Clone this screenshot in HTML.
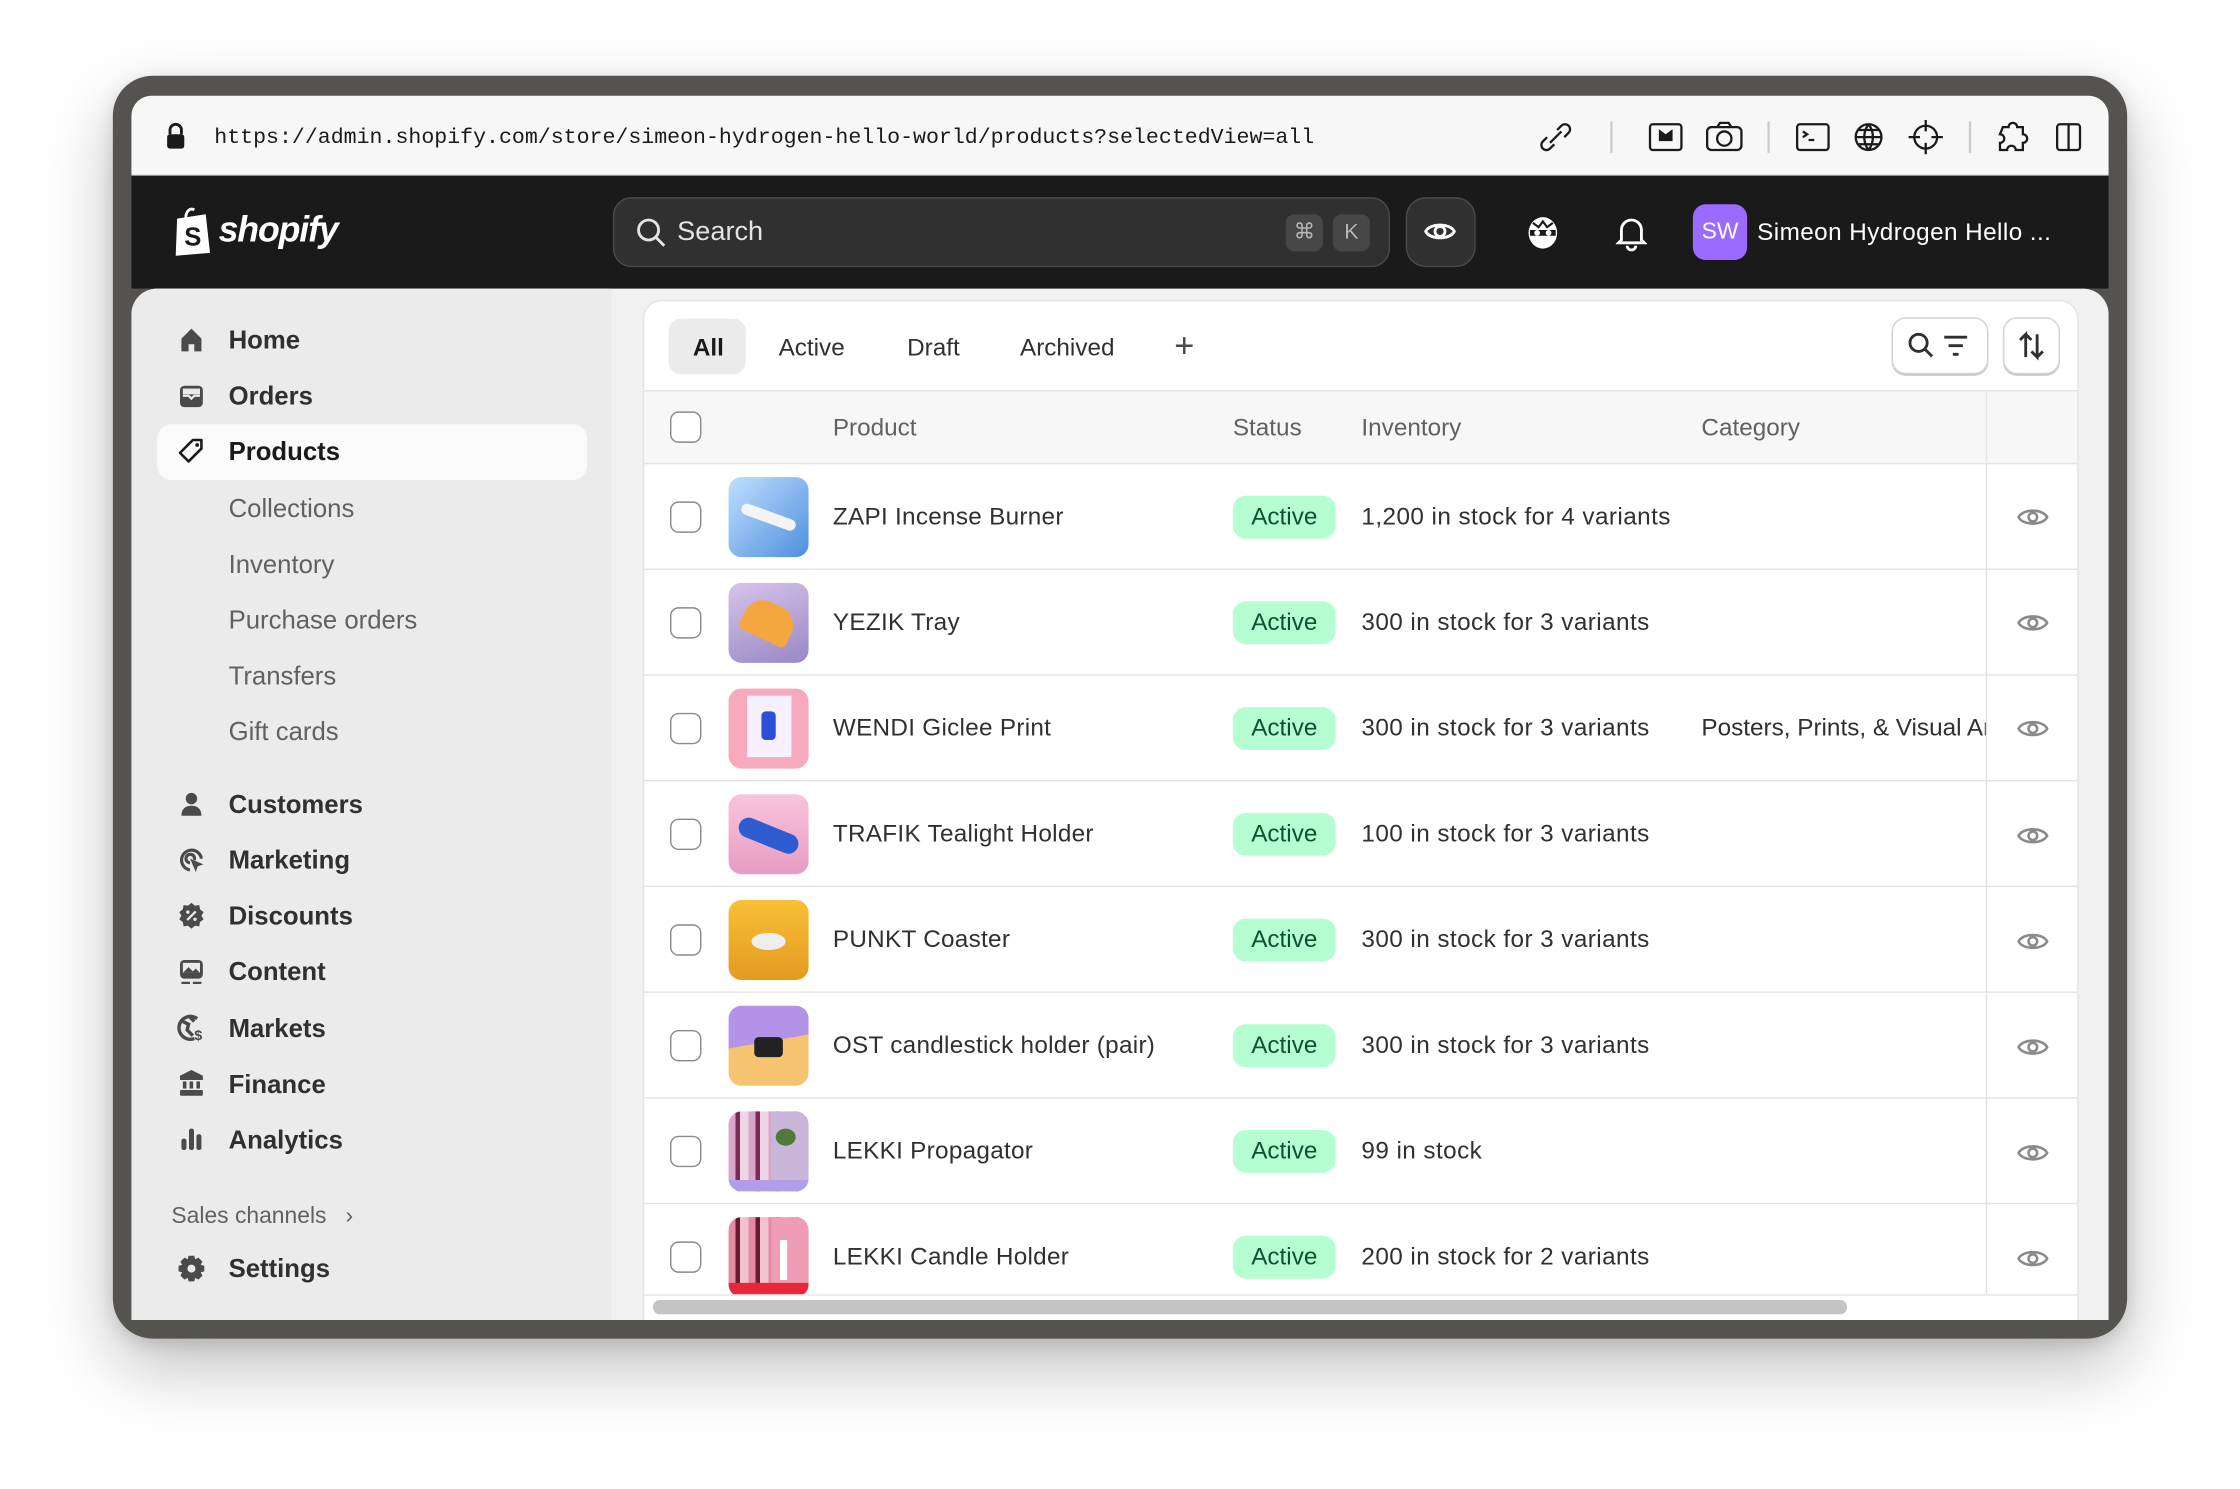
<!DOCTYPE html>
<html><head><meta charset="utf-8"><style>
*{box-sizing:border-box;margin:0;padding:0}
html,body{width:2240px;height:1488px;overflow:hidden;background:#fff}
#s{position:absolute;left:0;top:0;width:1568px;height:1042px;transform:scale(1.428571);transform-origin:0 0;font-family:"Liberation Sans",sans-serif;background:#fff}
.abs{position:absolute}
.frame{left:79px;top:53px;width:1410px;height:884px;background:#55534f;border-radius:28px;box-shadow:0 20px 50px rgba(0,0,0,.25),0 4px 12px rgba(0,0,0,.12)}
.url{left:92px;top:67px;width:1384px;height:56px;background:#f7f7f7;border-radius:14px 14px 0 0;border-bottom:1px solid #ddd}
.urltxt{left:150px;top:87px;font-family:"Liberation Mono",monospace;font-size:15.1px;color:#1a1a1a}
.nav{left:92px;top:123px;width:1384px;height:79px;background:#1a1a1a}
.body{left:92px;top:202px;width:1384px;height:722px;background:#f1f1f1;border-radius:18px 18px 0 0;overflow:hidden}
.side{left:0;top:0;width:336px;height:722px;background:#ebebeb}
.ni{position:absolute;left:68px;font-size:18px;font-weight:bold;color:#303030}
.si{position:absolute;left:68px;font-size:18px;color:#616161}
.ic{position:absolute;left:32px;width:20px;height:20px}
.card{left:359px;top:9px;width:1003px;height:730px;background:#fff;border-radius:12px;box-shadow:0 0 0 1px #e3e3e3;overflow:hidden}
.tab{position:absolute;top:23px;font-size:17px;color:#303030}
.th{position:absolute;top:79px;font-size:17px;color:#616161}
.row{position:absolute;left:0;width:1003px;height:74px;border-top:1px solid #e3e3e3}
.cb{position:absolute;left:18px;width:22px;height:22px;border:1.5px solid #8a8a8a;border-radius:6px;background:#fff}
.thumb{position:absolute;left:59px;top:9px;width:56px;height:56px;border-radius:9px;overflow:hidden}
.pn{position:absolute;left:132px;top:27px;font-size:17px;color:#303030;letter-spacing:0.2px}
.badge{position:absolute;left:412px;top:22px;height:30px;width:72px;text-align:center;line-height:30px;border-radius:9px;background:#b4fed2;color:#0c5132;font-size:17px}
.inv{position:absolute;left:502px;top:27px;font-size:17px;color:#303030;letter-spacing:0.3px}
.cat{position:absolute;left:740px;top:27px;font-size:17px;color:#303030;width:200px;white-space:nowrap;overflow:hidden}
</style></head><body><div id="s">
<div class="abs frame"></div>
<div class="abs url"></div>
<svg class="abs" style="left:115px;top:85px" width="16" height="20" viewBox="0 0 16 20"><path d="M4 9V6a4 4 0 018 0v3" fill="none" stroke="#1a1a1a" stroke-width="2"/><rect x="2" y="9" width="12" height="10" rx="2" fill="#1a1a1a"/></svg>
<div class="abs urltxt">https://admin.shopify.com/store/simeon-hydrogen-hello-world/products?selectedView=all</div>
<svg class="abs" style="left:1076px;top:83px" width="400" height="26" viewBox="0 0 400 26" fill="none" stroke="#1a1a1a" stroke-width="1.6">
<path d="M9 17l8-8M7 13l-3 3a3.5 3.5 0 005 5l3-3M19 13l3-3a3.5 3.5 0 00-5-5l-3 3"/>
<line x1="52" y1="2" x2="52" y2="24" stroke="#ccc"/>
<rect x="79" y="4" width="22" height="18" rx="2"/><path d="M86 9l4 3 4-3v6h-8z" fill="#1a1a1a"/>
<rect x="119" y="6" width="24" height="16" rx="3"/><circle cx="131" cy="14" r="5"/><path d="M126 6l2-3h6l2 3"/>
<line x1="162" y1="2" x2="162" y2="24" stroke="#ccc"/>
<rect x="182" y="4" width="22" height="18" rx="2"/><path d="M186 9l3 2-3 2M190 15h4"/>
<circle cx="232" cy="13" r="9"/><path d="M223 13h18M232 4c-4 5-4 13 0 18M232 4c4 5 4 13 0 18M225 8h14M225 18h14"/>
<circle cx="272" cy="13" r="8"/><path d="M272 1v8M272 17v8M260 13h8M276 13h8"/>
<line x1="303" y1="2" x2="303" y2="24" stroke="#ccc"/>
<path d="M326 6h4a3 3 0 016 0h4v5a3 3 0 010 6v5h-5a3 3 0 00-6 0h-5v-5a3 3 0 000-6z"/>
<rect x="364" y="4" width="16" height="18" rx="2"/><line x1="372" y1="4" x2="372" y2="22"/>
</svg>
<div class="abs nav"></div>
<svg class="abs" style="left:120px;top:144px" width="30" height="36" viewBox="0 0 30 36"><path d="M4 9l20-3 3 27-24 2z" fill="#fff"/><path d="M10 9c0-5 3-8 6-6" fill="none" stroke="#fff" stroke-width="2"/><text x="9" y="28" font-family="Liberation Sans" font-weight="bold" font-size="18" fill="#1a1a1a">S</text></svg>
<div class="abs" style="left:153px;top:147px;font-size:25px;font-weight:bold;font-style:italic;color:#fff;letter-spacing:-0.8px">shopify</div>
<div class="abs" style="left:429px;top:138px;width:544px;height:49px;background:#303030;border:1px solid #4a4a4a;border-radius:13px"></div>
<svg class="abs" style="left:445px;top:152px" width="22" height="22" viewBox="0 0 22 22" fill="none" stroke="#e3e3e3" stroke-width="2"><circle cx="9" cy="9" r="7"/><path d="M14 14l6 6"/></svg>
<div class="abs" style="left:474px;top:152px;font-size:19px;color:#e3e3e3">Search</div>
<div class="abs" style="left:900px;top:150px;width:26px;height:26px;background:#474747;border-radius:6px;color:#b5b5b5;font-size:15px;text-align:center;line-height:26px">⌘</div>
<div class="abs" style="left:933px;top:150px;width:26px;height:26px;background:#474747;border-radius:6px;color:#b5b5b5;font-size:15px;text-align:center;line-height:26px">K</div>
<div class="abs" style="left:984px;top:138px;width:49px;height:49px;background:#303030;border:1px solid #4a4a4a;border-radius:14px"></div>
<svg class="abs" style="left:996px;top:150px" width="24" height="24" viewBox="0 0 24 24" fill="none" stroke="#fff" stroke-width="2"><path d="M2 12c3-6 17-6 20 0c-3 6-17 6-20 0z"/><circle cx="12" cy="12" r="3.5"/></svg>
<svg class="abs" style="left:1068px;top:150px" width="24" height="26" viewBox="0 0 24 26"><ellipse cx="12" cy="13" rx="10" ry="11" fill="#fff"/><path d="M3 11h18v4H3z" fill="#1a1a1a"/><circle cx="8" cy="13" r="2" fill="#fff"/><circle cx="16" cy="13" r="2" fill="#fff"/><path d="M5 6l4 3 3-4 3 4 4-3" stroke="#1a1a1a" fill="none" stroke-width="1.5"/></svg>
<svg class="abs" style="left:1131px;top:150px" width="22" height="26" viewBox="0 0 22 26" fill="none" stroke="#fff" stroke-width="2"><path d="M4 18V11a7 7 0 0114 0v7l2 2H2z"/><path d="M8 22a3 3 0 006 0"/></svg>
<div class="abs" style="left:1185px;top:143px;width:38px;height:39px;background:#9b6bff;border-radius:9px;color:#fff;font-size:16px;text-align:center;line-height:39px">SW</div>
<div class="abs" style="left:1230px;top:153px;font-size:17px;color:#fff;letter-spacing:0.3px">Simeon Hydrogen Hello ...</div>

<div class="abs body">
 <div class="abs side">
  <div class="abs" style="left:18px;top:95px;width:301px;height:39px;background:#fafafa;border-radius:10px"></div>
  <svg class="ic" style="top:26px" viewBox="0 0 20 20"><path d="M3 9l7-7 7 7v9h-5v-5H8v5H3z" fill="#4a4a4a"/></svg>
  <div class="ni" style="top:26px">Home</div>
  <svg class="ic" style="top:65px" viewBox="0 0 20 20"><rect x="2" y="3" width="16" height="15" rx="3" fill="#4a4a4a"/><path d="M4 10h4l2 2 2-2h4" stroke="#ebebeb" fill="none" stroke-width="1.6"/><rect x="4" y="5" width="12" height="4" fill="#ebebeb"/></svg>
  <div class="ni" style="top:65px">Orders</div>
  <svg class="ic" style="top:104px" viewBox="0 0 20 20"><path d="M11 2h6v6l-9 9-6-6z" fill="none" stroke="#1a1a1a" stroke-width="1.8" stroke-linejoin="round"/><circle cx="14" cy="5.5" r="1.3" fill="#1a1a1a"/></svg>
  <div class="ni" style="top:104px;color:#1a1a1a">Products</div>
  <div class="si" style="top:144px">Collections</div>
  <div class="si" style="top:183px">Inventory</div>
  <div class="si" style="top:222px">Purchase orders</div>
  <div class="si" style="top:261px">Transfers</div>
  <div class="si" style="top:300px">Gift cards</div>
  <svg class="ic" style="top:351px" viewBox="0 0 20 20" fill="#4a4a4a"><circle cx="10" cy="6" r="4"/><path d="M3 18c0-5 3-7 7-7s7 2 7 7z"/></svg>
  <div class="ni" style="top:351px">Customers</div>
  <svg class="ic" style="top:390px" viewBox="0 0 20 20" fill="none" stroke="#4a4a4a" stroke-width="2.2"><path d="M17 9a7 7 0 10-8 8"/><path d="M12 10a3 3 0 10-3 2"/><path d="M10 10l7 3-3 1-1 3z" fill="#4a4a4a" stroke-width="1"/></svg>
  <div class="ni" style="top:390px">Marketing</div>
  <svg class="ic" style="top:429px" viewBox="0 0 20 20"><path d="M10 1l2.5 2 3-.5.5 3 2.5 2-1.5 2.5 1.5 2.5-2.5 2-.5 3-3-.5L10 19l-2.5-2-3 .5-.5-3-2.5-2L3 10 1.5 7.5l2.5-2 .5-3 3 .5z" fill="#4a4a4a"/><path d="M7 13l6-6" stroke="#ebebeb" stroke-width="1.6"/><circle cx="7.5" cy="7.5" r="1.2" fill="#ebebeb"/><circle cx="12.5" cy="12.5" r="1.2" fill="#ebebeb"/></svg>
  <div class="ni" style="top:429px">Discounts</div>
  <svg class="ic" style="top:468px" viewBox="0 0 20 20"><rect x="2" y="2" width="16" height="13" rx="3" fill="#4a4a4a"/><rect x="4" y="4" width="12" height="7" fill="#ebebeb"/><path d="M4 11l4-4 3 3 2-2 3 3z" fill="#4a4a4a"/><path d="M3 18h6M11 18h6" stroke="#4a4a4a" stroke-width="1.6"/></svg>
  <div class="ni" style="top:468px">Content</div>
  <svg class="ic" style="top:507px" viewBox="0 0 20 20"><path d="M14 4a8 8 0 10-2 14" fill="none" stroke="#4a4a4a" stroke-width="2.4"/><path d="M4 6l4 2-1 4 4 4M9 3l3 3" stroke="#4a4a4a" stroke-width="2.4" fill="none"/><text x="12" y="19" font-size="10" font-weight="bold" fill="#4a4a4a" font-family="Liberation Sans">$</text></svg>
  <div class="ni" style="top:508px">Markets</div>
  <svg class="ic" style="top:546px" viewBox="0 0 20 20" fill="#4a4a4a"><path d="M10 1l8 4v3H2V5z"/><rect x="2" y="15" width="16" height="4" rx="1"/><rect x="4" y="9" width="2.5" height="5"/><rect x="8.7" y="9" width="2.5" height="5"/><rect x="13.5" y="9" width="2.5" height="5"/></svg>
  <div class="ni" style="top:547px">Finance</div>
  <svg class="ic" style="top:585px" viewBox="0 0 20 20" fill="#4a4a4a"><rect x="3" y="10" width="3.5" height="8" rx="1.5"/><rect x="8.3" y="3" width="3.5" height="15" rx="1.5"/><rect x="13.5" y="7" width="3.5" height="11" rx="1.5"/></svg>
  <div class="ni" style="top:586px">Analytics</div>
  <div class="abs" style="left:28px;top:641px;font-size:16px;color:#616161">Sales channels&nbsp;&nbsp; ›</div>
  <svg class="ic" style="top:676px" viewBox="0 0 20 20"><path d="M8 1h4l.6 2.5 2.3-1.2 2.8 2.8-1.2 2.3L19 8v4l-2.5.6 1.2 2.3-2.8 2.8-2.3-1.2L12 19H8l-.6-2.5-2.3 1.2-2.8-2.8 1.2-2.3L1 12V8l2.5-.6-1.2-2.3 2.8-2.8 2.3 1.2z" fill="#4a4a4a"/><circle cx="10" cy="10" r="2.8" fill="#ebebeb"/></svg>
  <div class="ni" style="top:676px">Settings</div>
 </div>
 <div class="abs card">
  <div class="abs" style="left:17px;top:12px;width:54px;height:39px;background:#ebebeb;border-radius:9px"></div>
  <div class="tab" style="left:34px;font-weight:bold;color:#1a1a1a">All</div>
  <div class="tab" style="left:94px">Active</div>
  <div class="tab" style="left:184px">Draft</div>
  <div class="tab" style="left:263px">Archived</div>
  <div class="tab" style="left:371px;font-size:24px;top:18px;color:#4a4a4a">+</div>
  <div class="abs" style="left:874px;top:12px;width:66px;height:38px;border-radius:9px;box-shadow:0 0 0 1px #d4d4d4,0 1px 0 1px #c4c4c4"></div>
  <svg class="abs" style="left:884px;top:21px" width="48" height="20" viewBox="0 0 48 20" fill="none" stroke="#303030" stroke-width="2"><circle cx="8" cy="8" r="6"/><path d="M12.5 12.5l5 5M26 4h16M29 10h10M32 16h4"/></svg>
  <div class="abs" style="left:952px;top:12px;width:38px;height:38px;border-radius:9px;box-shadow:0 0 0 1px #d4d4d4,0 1px 0 1px #c4c4c4"></div>
  <svg class="abs" style="left:960px;top:20px" width="22" height="22" viewBox="0 0 22 22" fill="none" stroke="#303030" stroke-width="2"><path d="M7 19V3L3 7M7 3l4 4M15 3v16l-4-4M15 19l4-4"/></svg>
  <div class="abs" style="left:0;top:62px;width:1003px;height:51px;background:#f7f7f7;border-top:1px solid #e3e3e3"></div>
  <div class="cb" style="top:77px"></div>
  <div class="th" style="left:132px">Product</div>
  <div class="th" style="left:412px">Status</div>
  <div class="th" style="left:502px">Inventory</div>
  <div class="th" style="left:740px">Category</div>

  <div class="row" style="top:113px"><div class="cb" style="top:26px"></div><div class="thumb" style="background:linear-gradient(135deg,#bfe0ff,#4f8fdc)"><div class="abs" style="left:8px;top:24px;width:40px;height:8px;background:#f4f4f4;border-radius:4px;transform:rotate(20deg)"></div></div><div class="pn">ZAPI Incense Burner</div><div class="badge">Active</div><div class="inv">1,200 in stock for 4 variants</div></div>
  <div class="row" style="top:187px"><div class="cb" style="top:26px"></div><div class="thumb" style="background:linear-gradient(160deg,#d5c4ea,#9a87c5)"><div class="abs" style="left:10px;top:14px;width:36px;height:26px;background:#f4a640;border-radius:14px 14px 4px 4px;transform:rotate(25deg)"></div></div><div class="pn">YEZIK Tray</div><div class="badge">Active</div><div class="inv">300 in stock for 3 variants</div></div>
  <div class="row" style="top:261px"><div class="cb" style="top:26px"></div><div class="thumb" style="background:#f7a9bd"><div class="abs" style="left:13px;top:5px;width:31px;height:43px;background:#f7f1ff"></div><div class="abs" style="left:23px;top:16px;width:10px;height:20px;background:#2c4fd8;border-radius:3px"></div></div><div class="pn">WENDI Giclee Print</div><div class="badge">Active</div><div class="inv">300 in stock for 3 variants</div><div class="cat">Posters, Prints, &amp; Visual Art</div></div>
  <div class="row" style="top:335px"><div class="cb" style="top:26px"></div><div class="thumb" style="background:linear-gradient(180deg,#f8c4dc,#e79cc2)"><div class="abs" style="left:6px;top:22px;width:44px;height:14px;background:#2d5bd0;border-radius:7px;transform:rotate(22deg)"></div></div><div class="pn">TRAFIK Tealight Holder</div><div class="badge">Active</div><div class="inv">100 in stock for 3 variants</div></div>
  <div class="row" style="top:409px"><div class="cb" style="top:26px"></div><div class="thumb" style="background:linear-gradient(180deg,#f8c038,#e49a1e)"><div class="abs" style="left:16px;top:23px;width:24px;height:12px;background:#eee;border-radius:50%"></div></div><div class="pn">PUNKT Coaster</div><div class="badge">Active</div><div class="inv">300 in stock for 3 variants</div></div>
  <div class="row" style="top:483px"><div class="cb" style="top:26px"></div><div class="thumb" style="background:linear-gradient(170deg,#b293e8 45%,#f6c471 46%)"><div class="abs" style="left:18px;top:22px;width:20px;height:14px;background:#222;border-radius:3px"></div></div><div class="pn">OST candlestick holder (pair)</div><div class="badge">Active</div><div class="inv">300 in stock for 3 variants</div></div>
  <div class="row" style="top:557px"><div class="cb" style="top:26px"></div><div class="thumb" style="background:repeating-linear-gradient(90deg,#d8a6c8 0 5px,#7a2a55 5px 8px,#efd6e6 8px 14px);"><div class="abs" style="left:30px;top:0;width:26px;height:56px;background:#c9b6d9"></div><div class="abs" style="left:0;top:48px;width:56px;height:8px;background:#b29ee8"></div><div class="abs" style="left:33px;top:12px;width:14px;height:12px;background:#4f7b38;border-radius:50%"></div></div><div class="pn">LEKKI Propagator</div><div class="badge">Active</div><div class="inv">99 in stock</div></div>
  <div class="row" style="top:631px"><div class="cb" style="top:26px"></div><div class="thumb" style="background:repeating-linear-gradient(90deg,#e58aa5 0 5px,#6b1a35 5px 8px,#f4c3d0 8px 14px);"><div class="abs" style="left:30px;top:0;width:26px;height:56px;background:#ef9db5"></div><div class="abs" style="left:0;top:46px;width:56px;height:10px;background:#e8283a"></div><div class="abs" style="left:36px;top:16px;width:5px;height:28px;background:#fff"></div></div><div class="pn">LEKKI Candle Holder</div><div class="badge">Active</div><div class="inv">200 in stock for 2 variants</div></div>

  <div class="abs" style="left:939px;top:62px;width:64px;height:633px;border-left:1px solid #e3e3e3;background:transparent"></div>
  <svg class="abs" style="left:960px;top:141px" width="24" height="560" viewBox="0 0 24 560" fill="none" stroke="#8a8a8a" stroke-width="1.8">
   <g><path d="M2 10c3-6 17-6 20 0c-3 6-17 6-20 0z"/><circle cx="12" cy="10" r="3"/></g>
   <g transform="translate(0,74)"><path d="M2 10c3-6 17-6 20 0c-3 6-17 6-20 0z"/><circle cx="12" cy="10" r="3"/></g>
   <g transform="translate(0,148)"><path d="M2 10c3-6 17-6 20 0c-3 6-17 6-20 0z"/><circle cx="12" cy="10" r="3"/></g>
   <g transform="translate(0,223)"><path d="M2 10c3-6 17-6 20 0c-3 6-17 6-20 0z"/><circle cx="12" cy="10" r="3"/></g>
   <g transform="translate(0,297)"><path d="M2 10c3-6 17-6 20 0c-3 6-17 6-20 0z"/><circle cx="12" cy="10" r="3"/></g>
   <g transform="translate(0,371)"><path d="M2 10c3-6 17-6 20 0c-3 6-17 6-20 0z"/><circle cx="12" cy="10" r="3"/></g>
   <g transform="translate(0,445)"><path d="M2 10c3-6 17-6 20 0c-3 6-17 6-20 0z"/><circle cx="12" cy="10" r="3"/></g>
   <g transform="translate(0,519)"><path d="M2 10c3-6 17-6 20 0c-3 6-17 6-20 0z"/><circle cx="12" cy="10" r="3"/></g>
  </svg>
  <div class="abs" style="left:0;top:695px;width:1003px;height:20px;background:#fff;border-top:1px solid #e3e3e3"></div>
  <div class="abs" style="left:6px;top:699px;width:836px;height:10px;background:#c4c4c4;border-radius:5px"></div>
 </div>
</div>
</div></body></html>
